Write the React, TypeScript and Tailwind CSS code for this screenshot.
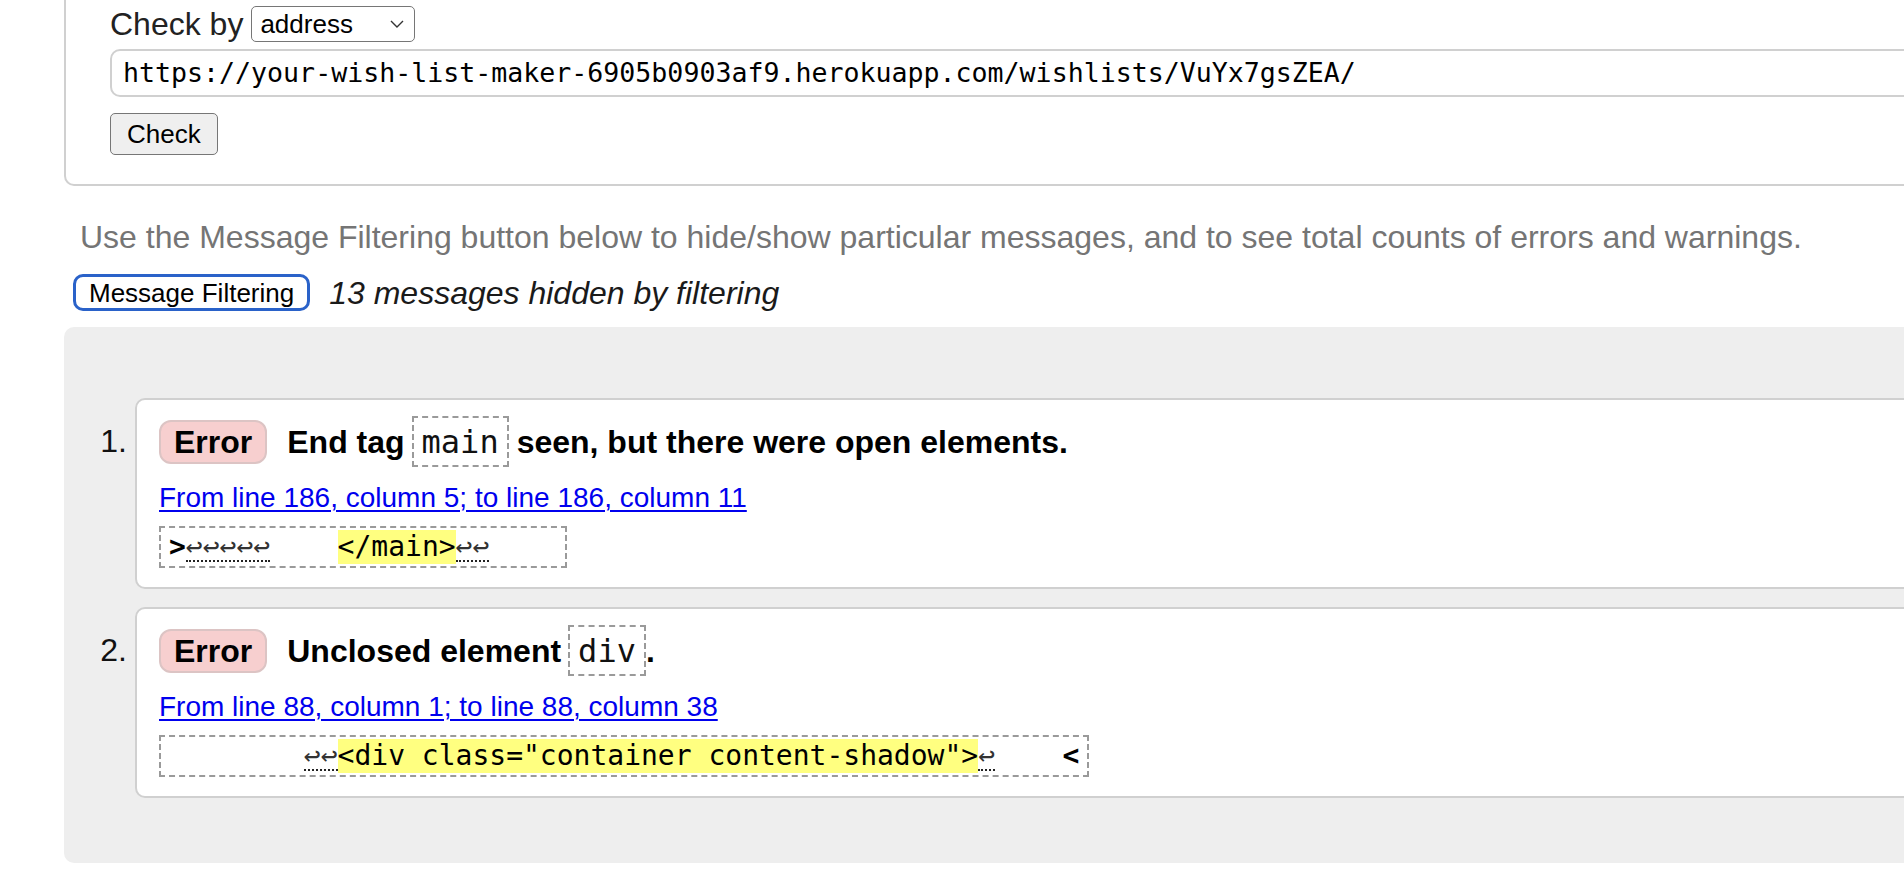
import React from "react";

const sans = "font-['Liberation_Sans',Arial,sans-serif]";
const mono = "font-['DejaVu_Sans_Mono','Liberation_Mono',monospace]";

function Badge() {
  return (
    <span className="inline-flex items-center h-[44px] px-[13px] bg-[#f7cfcf] border-2 border-[#dcc4c4] rounded-[12px] text-[32px] font-bold text-black leading-none">
      Error
    </span>
  );
}

function Code({ children }: { children: React.ReactNode }) {
  return (
    <span className={`inline-flex items-center h-[51px] px-[8px] border-2 border-dashed border-[#9a9a9a] text-[32px] font-normal text-[#111] ${mono}`}>
      {children}
    </span>
  );
}

function LF({ n }: { n: number }) {
  return (
    <span className="text-[#333] border-b-2 border-dotted border-[#222] leading-[26px] inline-block">
      {"↩".repeat(n)}
    </span>
  );
}

function Extract({ children }: { children: React.ReactNode }) {
  return (
    <div className={`inline-flex items-center h-[42px] px-[8px] border-2 border-dashed border-[#9a9a9a] text-[28px] text-black ${mono}`}>
      <span className="whitespace-pre">{children}</span>
    </div>
  );
}

function Hl({ children }: { children: React.ReactNode }) {
  return <span className="bg-[#ffff80] leading-[34px] inline-block">{children}</span>;
}

function Card({
  num,
  title,
  link,
  extract,
  first,
}: {
  num: string;
  title: React.ReactNode;
  link: string;
  extract: React.ReactNode;
  first?: boolean;
}) {
  return (
    <li className={`flex ${first ? "" : "mt-[18px]"}`}>
      <div className="w-[71px] shrink-0 pt-[18px] pr-[8px] text-right text-[32px] leading-[51px] text-[#111]">
        {num}
      </div>
      <div className="flex-1 h-[191px] bg-white border-2 border-[#d0d0d0] rounded-[10px] pl-[22px] pt-[16px]">
        <div className="flex items-center h-[51px] text-[32px] font-bold text-black">{title}</div>
        <div className="mt-[15px] h-[32px] leading-[32px]">
          <a href="#" className="text-[28px] text-[#0000ee] underline underline-offset-[3px] decoration-[2px]">
            {link}
          </a>
        </div>
        <div className="mt-[12px]">{extract}</div>
      </div>
    </li>
  );
}

export default function App() {
  return (
    <div className={`w-[1904px] h-[874px] overflow-hidden bg-white ${sans}`}>
      {/* Top form card */}
      <div className="ml-[64px] w-[1900px] h-[186px] border-l-2 border-b-2 border-[#d0d0d0] rounded-bl-[10px] pl-[44px] pt-[6px]">
        <div className="flex items-center h-[36px]">
          <span className="text-[32px] text-[#222] leading-none">Check by</span>
          <div className="ml-[8px] w-[164px] h-[36px] flex items-center justify-between border border-[#767676] rounded-[5px] pl-[8px] pr-[10px] bg-white">
            <span className="text-[26px] text-black leading-none">address</span>
            <svg width="14" height="8" viewBox="0 0 14 8" fill="none">
              <polyline points="1,1 7,7 13,1" stroke="#333" strokeWidth="1.4" />
            </svg>
          </div>
        </div>
        <div
          className={`mt-[7px] w-[1850px] h-[48px] flex items-center border-2 border-[#d0d0d0] rounded-[10px] pl-[11px] text-[26.6px] text-black ${mono}`}
        >
          https://your-wish-list-maker-6905b0903af9.herokuapp.com/wishlists/VuYx7gsZEA/
        </div>
        <div className="mt-[16px]">
          <button className="h-[42px] px-[16px] bg-[#efefef] border border-[#767676] rounded-[5px] text-[26px] text-black leading-none">
            Check
          </button>
        </div>
      </div>

      {/* Description */}
      <p className="mt-[33px] ml-[80px] text-[32px] leading-[36px] text-[#757575] whitespace-nowrap">
        Use the Message Filtering button below to hide/show particular messages, and to see total counts of errors and warnings.
      </p>

      {/* Filtering row */}
      <div className="mt-[19px] ml-[73px] flex items-center h-[37px]">
        <button className="h-[37px] px-[13px] bg-white border-[3px] border-[#2a62c9] rounded-[10px] text-[26px] text-black leading-none">
          Message Filtering
        </button>
        <span className="ml-[19px] text-[32px] italic text-[#1a1a1a] leading-none">
          13 messages hidden by filtering
        </span>
      </div>

      {/* Results */}
      <div className="mt-[16px] ml-[64px] w-[1900px] bg-[#eeeeee] rounded-l-[10px] pt-[71px] pb-[65px]">
        <ol className="list-none m-0 p-0">
          <Card
            first
            num="1."
            title={
              <>
                <Badge />
                <span className="ml-[20px]">End tag</span>
                <span className="ml-[7px] mr-[8px] flex">
                  <Code>main</Code>
                </span>
                <span>seen, but there were open elements.</span>
              </>
            }
            link="From line 186, column 5; to line 186, column 11"
            extract={
              <Extract>
                <b>&gt;</b>
                <LF n={5} />
                {"    "}
                <Hl>&lt;/main&gt;</Hl>
                <LF n={2} />
                {"    "}
              </Extract>
            }
          />
          <Card
            num="2."
            title={
              <>
                <Badge />
                <span className="ml-[20px]">Unclosed element</span>
                <span className="ml-[7px] flex">
                  <Code>div</Code>
                </span>
                <span>.</span>
              </>
            }
            link="From line 88, column 1; to line 88, column 38"
            extract={
              <Extract>
                {"        "}
                <LF n={2} />
                <Hl>&lt;div class="container content-shadow"&gt;</Hl>
                <LF n={1} />
                {"    "}
                <b>&lt;</b>
              </Extract>
            }
          />
        </ol>
      </div>
    </div>
  );
}
